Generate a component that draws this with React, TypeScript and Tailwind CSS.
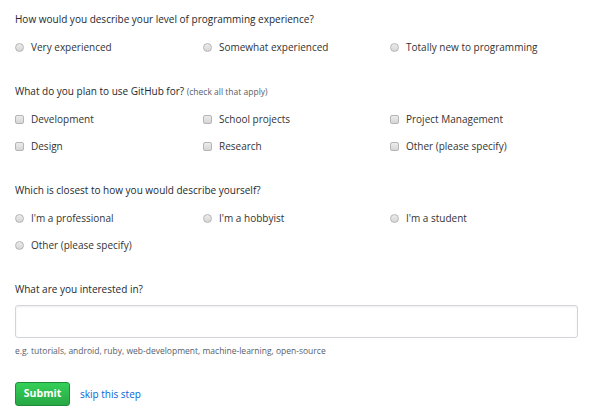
const sections = [
  {
    title: 'How would you describe your level of programming experience?',
    type: 'radio',
    options: ['Very experienced', 'Somewhat experienced', 'Totally new to programming'],
  },
  {
    title: 'What do you plan to use GitHub for?',
    note: '(check all that apply)',
    type: 'checkbox',
    options: ['Development', 'School projects', 'Project Management', 'Design', 'Research', 'Other (please specify)'],
  },
  {
    title: 'Which is closest to how you would describe yourself?',
    type: 'radio',
    options: ["I'm a professional", "I'm a hobbyist", "I'm a student", 'Other (please specify)'],
  },
];

function Mark({ type }: { type: string }) {
  return (
    <span
      className={`inline-block h-[9px] w-[9px] border border-[#b5b5b5] bg-gradient-to-b from-[#ececec] to-[#d6d6d6] ${
        type === 'radio' ? 'rounded-full' : 'rounded-[2px]'
      }`}
    />
  );
}

export default function App() {
  return (
    <div className="min-h-screen bg-white px-[15px] pt-[11px] text-[10px] text-[#333] [font-family:'Open_Sans',sans-serif]">
      {sections.map((s) => (
        <section key={s.title} className="mb-[28px]">
          <h3 className="h-4 leading-4 font-normal text-[#24292e]">
            {s.title} {s.note && <span className="text-[8.5px] text-[#586069]">{s.note}</span>}
          </h3>
          <div className="mt-3 grid grid-cols-[188px_187px_1fr] gap-y-[11px]">
            {s.options.map((o) => (
              <label key={o} className="flex h-4 items-center gap-[7px] leading-4">
                <Mark type={s.type} />
                <span>{o}</span>
              </label>
            ))}
          </div>
        </section>
      ))}

      <section>
        <h3 className="h-4 leading-4 text-[#24292e]">What are you interested in?</h3>
        <input
          type="text"
          className="mt-2 block h-[33px] w-[563px] rounded-[3px] border border-[#d1d5da] bg-white px-2 shadow-[inset_0_1px_2px_rgba(27,31,35,0.075)] outline-none"
        />
        <p className="mt-[7px] h-3 text-[8.5px] leading-3 text-[#586069]">
          e.g. tutorials, android, ruby, web-development, machine-learning, open-source
        </p>
        <div className="mt-[25px] flex items-center gap-[10px]">
          <button
            type="button"
            className="h-[24px] w-[55px] rounded-[3px] border border-[#1e8c39] bg-gradient-to-b from-[#34d058] to-[#28a745] text-[10.5px] font-bold text-white"
          >
            Submit
          </button>
          <a href="#" className="text-[10px] text-[#0366d6]">
            skip this step
          </a>
        </div>
      </section>
    </div>
  );
}
